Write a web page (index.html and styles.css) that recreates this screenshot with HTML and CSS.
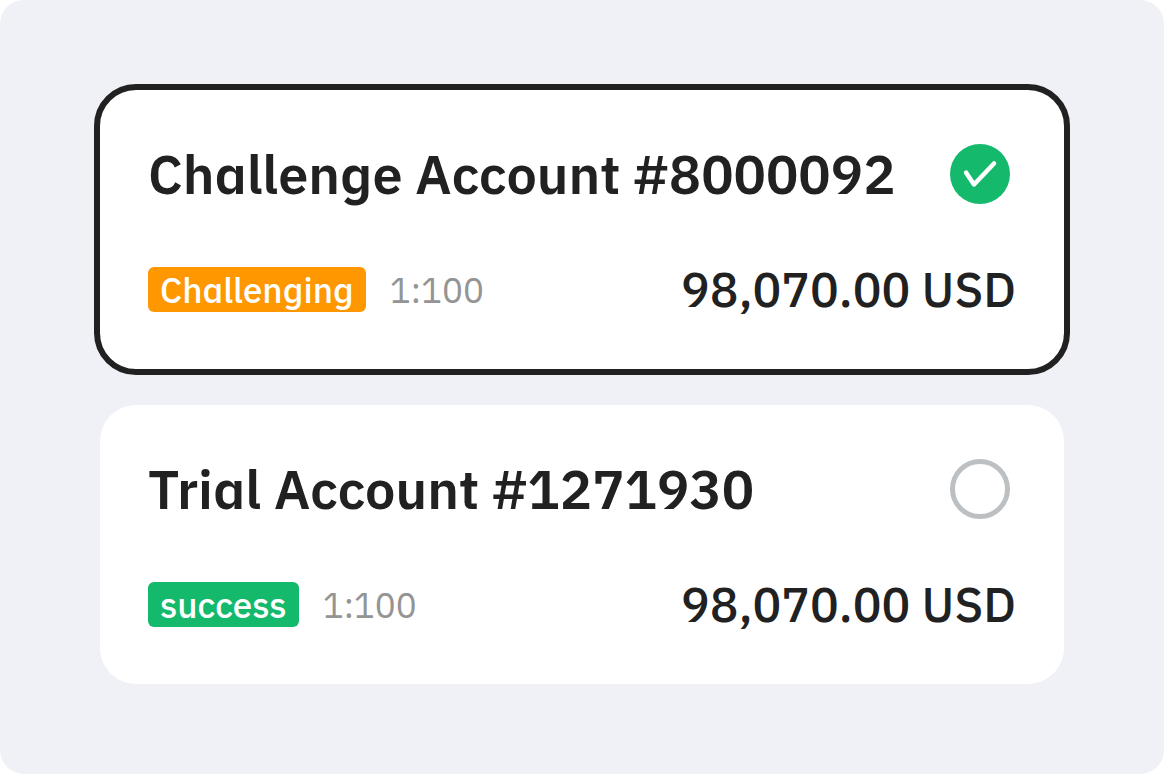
FILE: index.html
```html
<!DOCTYPE html>
<html lang="en">
<head>
<meta charset="utf-8">
<title>Accounts</title>
<link rel="stylesheet" href="styles.css">
</head>
<body>
<main class="panel">
  <label class="card">
    <span class="row head">
      <span class="title">Challenge Account #8000092</span>
      <input class="radio" type="radio" name="account" checked>
      <svg class="check" viewBox="0 0 60 60" aria-hidden="true"><circle cx="30" cy="30" r="30"/><path d="M16 28.500L24 40.500L44 19.500"/></svg>
    </span>
    <span class="row foot">
      <span class="badge orange">Challenging</span>
      <span class="ratio">1:100</span>
      <span class="amount">98,070.00 USD</span>
    </span>
  </label>
  <label class="card">
    <span class="row head">
      <span class="title">Trial Account #1271930</span>
      <input class="radio" type="radio" name="account">
      <svg class="check" viewBox="0 0 60 60" aria-hidden="true"><circle cx="30" cy="30" r="30"/><path d="M16 28.500L24 40.500L44 19.500"/></svg>
    </span>
    <span class="row foot">
      <span class="badge green">success</span>
      <span class="ratio">1:100</span>
      <span class="amount">98,070.00 USD</span>
    </span>
  </label>
</main>
</body>
</html>
```
FILE: styles.css
```css
* { box-sizing: border-box; }
body {
  margin: 0;
  background: #fff;
  color: #212121;
  font-family: "IBM Plex Sans", "Noto Sans", sans-serif;
  font-feature-settings: "ss01", "ss02";
}
.panel {
  display: flex;
  flex-direction: column;
  gap: 24px;
  min-height: 100vh;
  padding: 84px 94px;
  background: #f0f1f6;
  border-radius: 24px;
}
.card {
  display: flex;
  flex-direction: column;
  gap: 63px;
  padding: 54px 48px 57px;
  border: 6px solid #212121;
  border-radius: 42px;
  background: #fff;
  background-clip: padding-box;
  cursor: pointer;
}
.card:has(.radio:not(:checked)) { border-color: transparent; }
.row { display: flex; align-items: center; white-space: nowrap; }
.head { height: 60px; padding-right: 6px; }
.foot { height: 45px; }
.title { flex: 1; font-size: 54px; line-height: 60px; font-weight: 600; }
.radio {
  appearance: none;
  width: 60px;
  height: 60px;
  margin: 0;
  border: 5px solid #bcc0c3;
  border-radius: 50%;
}
.check { display: none; width: 60px; height: 60px; }
.radio:checked { width: 0; height: 0; border: 0; }
.radio:checked + .check { display: block; }
.check circle { fill: #14b96b; }
.check path { fill: none; stroke: #fff; stroke-width: 4.500; stroke-linecap: round; stroke-linejoin: round; }
.badge {
  height: 45px;
  padding: 0 12px;
  border-radius: 6px;
  color: #fff;
  font-size: 35px;
  line-height: 47px;
  font-weight: 500;
}
.orange { background: #ff9700; }
.green { background: #14b96b; }
.ratio { margin-left: 24px; color: #949494; font-size: 35px; line-height: 48px; }
.amount { margin-left: auto; font-size: 48px; line-height: 45px; font-weight: 500; }
```
